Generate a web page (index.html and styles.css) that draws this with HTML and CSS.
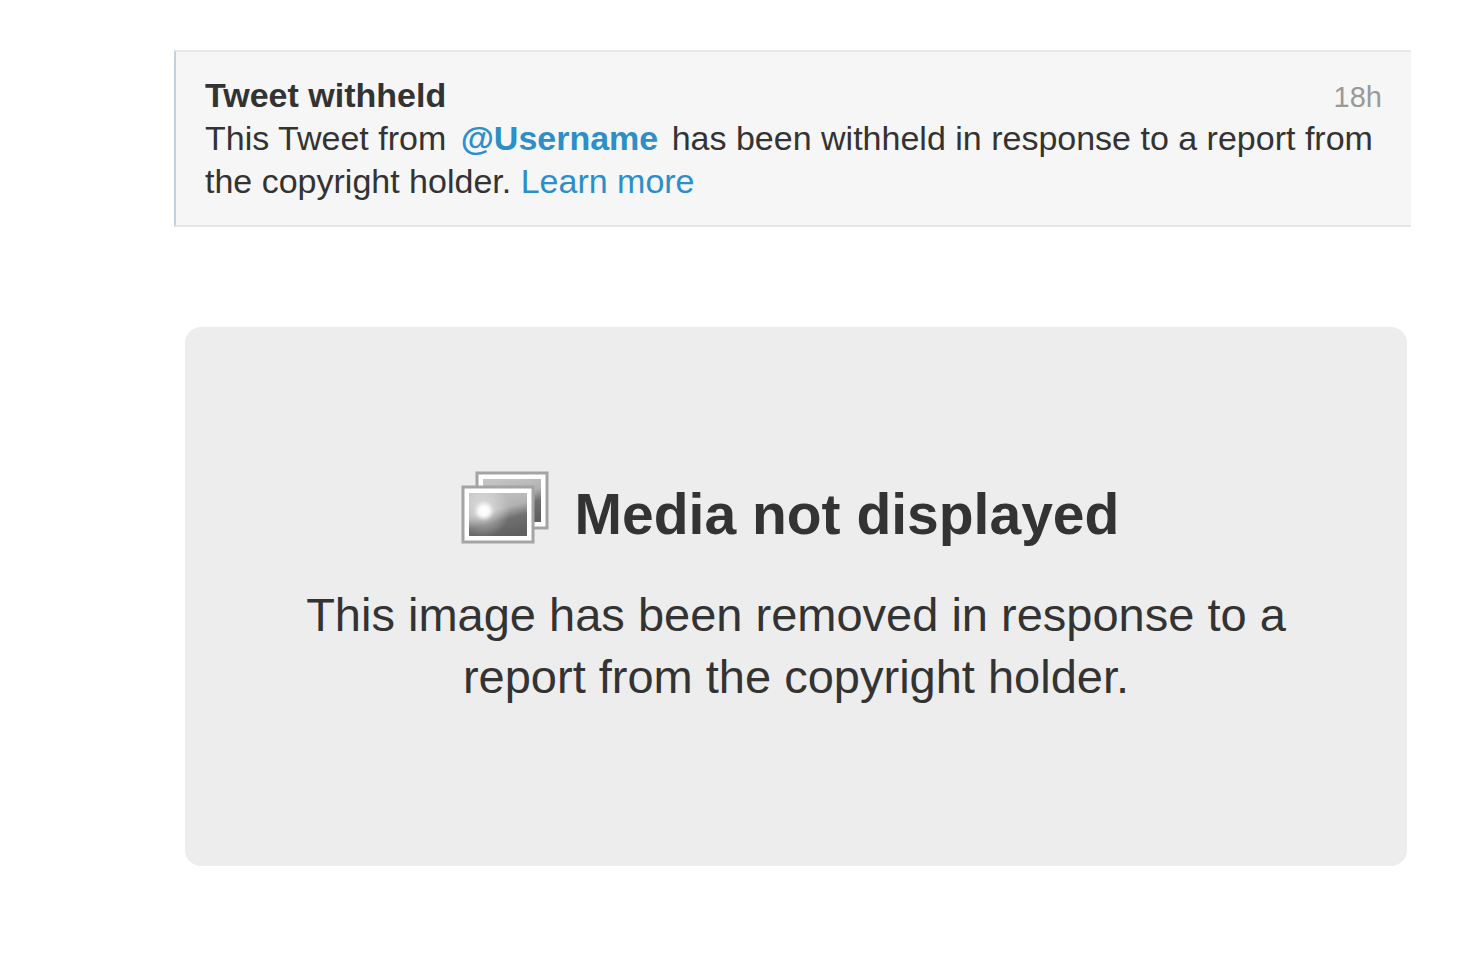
FILE: index.html
```html
<!DOCTYPE html>
<html lang="en">
<head>
    <meta charset="UTF-8">
    <meta name="viewport" content="width=device-width, initial-scale=1.0">
    <title>Tweet withheld</title>
    <link rel="stylesheet" href="styles.css">
</head>
<body>
    <main class="page">
        <article class="tweet">
            <header class="tweet-header">
                <h2 class="tweet-title">Tweet withheld</h2>
                <time class="tweet-time">18h</time>
            </header>
            <p class="tweet-text">This Tweet from <a class="username" href="#">@Username</a> has been withheld in response to a report from the copyright holder. <a href="#">Learn more</a></p>
        </article>

        <section class="media">
            <div class="media-header">
                <svg class="media-icon" viewBox="0 0 88 74" aria-hidden="true">
                    <defs>
                        <linearGradient id="photo" x1="0.3" y1="0" x2="0.65" y2="1">
                            <stop offset="0" stop-color="#c4c4c4"/>
                            <stop offset="0.4" stop-color="#b2b2b2"/>
                            <stop offset="0.65" stop-color="#707070"/>
                            <stop offset="1" stop-color="#606060"/>
                        </linearGradient>
                        <radialGradient id="sun" gradientUnits="userSpaceOnUse" cx="23" cy="40" r="26">
                            <stop offset="0" stop-color="#fff"/>
                            <stop offset="0.18" stop-color="#fff" stop-opacity="0.95"/>
                            <stop offset="0.4" stop-color="#fff" stop-opacity="0.35"/>
                            <stop offset="1" stop-color="#fff" stop-opacity="0"/>
                        </radialGradient>
                    </defs>
                    <rect x="16" y="2" width="70" height="55" fill="#fff" stroke="#a4a4a4" stroke-width="3"/>
                    <rect x="22" y="8" width="58" height="43" fill="url(#photo)"/>
                    <rect x="2" y="16" width="70" height="55" fill="#fff" stroke="#a4a4a4" stroke-width="3"/>
                    <rect x="8" y="22" width="58" height="43" fill="url(#photo)"/>
                    <rect x="8" y="22" width="58" height="43" fill="url(#sun)"/>
                </svg>
                <h1 class="media-title">Media not displayed</h1>
            </div>
            <p class="media-text">This image has been removed in response to a report from the copyright holder.</p>
        </section>
    </main>
</body>
</html>
```
FILE: styles.css
```css
body {
    background-color: #fff;
    color: #333;
    margin: 0;
    font-family: "Liberation Sans", Arial, sans-serif;
}
h1, h2, p {
    margin: 0;
}
a {
    color: #2c8fc9;
    text-decoration: none;
}
a:hover {
    text-decoration: underline;
}
.page {
    padding: 50px 63px 96px 174px;
}
.tweet {
    background-color: #f6f6f6;
    border: 2px solid #e8e8e8;
    border-left-color: #c2d3df;
    border-right: none;
    padding: 22px 29px;
    font-size: 34px;
    line-height: 43px;
}
.tweet-header {
    display: flex;
    justify-content: space-between;
    align-items: baseline;
}
.tweet-title {
    font-size: 34px;
}
.tweet-time {
    color: #999;
    font-size: 29px;
    line-height: 34px;
}
.username {
    font-weight: bold;
    margin: 0 4px 0 5px;
}
.media {
    background-color: #ededed;
    border-radius: 16px;
    margin: 100px 4px 0 11px;
    padding: 144px 100px 158px;
    text-align: center;
}
.media-header {
    display: flex;
    justify-content: center;
    gap: 26px;
    margin-bottom: 27px;
    padding-right: 12px;
}
.media-icon {
    width: 88px;
    height: 74px;
    flex-shrink: 0;
}
.media-title {
    font-size: 57px;
    line-height: 86px;
}
.media-text {
    font-size: 47px;
    line-height: 62px;
}
```
